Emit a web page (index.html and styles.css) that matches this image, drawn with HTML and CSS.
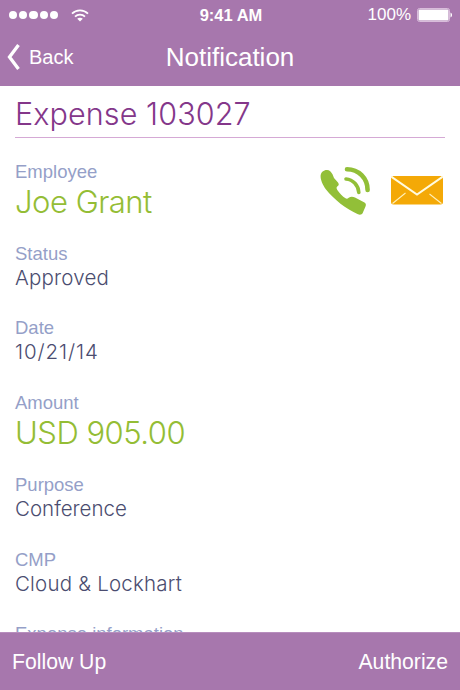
FILE: index.html
```html
<!DOCTYPE html>
<html lang="en">
<head>
  <meta charset="UTF-8">
  <meta name="viewport" content="width=device-width, initial-scale=1.0">
  <title>Notification</title>
  <link rel="stylesheet" href="styles.css">
</head>
<body>
  <div class="screen">
    <header class="header">
      <div class="status-bar">
        <div class="signal">
          <span class="dots"><i></i><i></i><i></i><i></i><i></i></span>
          <svg class="wifi" width="18" height="13" viewBox="0 0 18 13">
            <path d="M1 4.600C5.400.2 12.600.2 17 4.600M4 7.600c2.800-2.700 7.200-2.700 10 0" fill="none" stroke="#fff" stroke-width="1.800"/>
            <path d="M9 12.600 6.200 9.700c1.600-1.400 4-1.400 5.600 0z" fill="#fff"/>
          </svg>
        </div>
        <span class="clock">9:41 AM</span>
        <div class="power">
          <span class="percent">100%</span>
          <svg width="36" height="14" viewBox="0 0 36 14">
            <rect x=".5" y=".5" width="32" height="13" rx="2" fill="none" stroke="#d9bddb"/>
            <rect x="1.500" y="1.500" width="30" height="11" rx="1" fill="#fff"/>
            <path d="M33.500 4.500c2 .8 2 4.200 0 5z" fill="#fff"/>
          </svg>
        </div>
      </div>
      <div class="nav-bar">
        <a class="back">
          <svg width="14" height="28" viewBox="0 0 14 28">
            <path d="M11.500 2 2.500 14l9 12" fill="none" stroke="#fff" stroke-width="3.300"/>
          </svg>
          <span>Back</span>
        </a>
        <h1>Notification</h1>
      </div>
    </header>

    <main class="content">
      <h2>Expense 103027</h2>

      <div class="employee">
        <div class="field large">
          <label>Employee</label>
          <p class="name">Joe Grant</p>
        </div>
        <div class="actions">
          <svg width="52" height="50" viewBox="0 0 52 50">
            <path d="M.6 9.500C1 6 4 3.700 7 3.900c2.500.1 4.300 1.800 5.500 4.400L14 12l4 4.500c1.200 1.600 1 3-.5 3.800-1.200.8-1.200 2.200-.2 3.600 2.500 3.400 5.200 6.200 8.200 8.400 1.200.9 2.200.4 3.200-.6 1.800-1.300 4.200-1.300 6.300-.2l9.500 5c1.300.8 1.800 2.200 1 4l-2.800 6.500c-.7 1.600-2.700 2.200-4.700 1.300C26 43 14 33.500 6 23.500 2.500 18.500.3 13.500.6 9.500z" fill="#92bf38"/>
            <path d="M26 13c7 .5 12.500 6.500 12.800 13.500" fill="none" stroke="#92bf38" stroke-width="3.600" stroke-linecap="round"/>
            <path d="M27 3.200C38.500 3.200 47.600 12 47.600 24" fill="none" stroke="#92bf38" stroke-width="4.600" stroke-linecap="round"/>
          </svg>
          <svg width="52" height="29" viewBox="0 0 52 29">
            <rect width="52" height="28.500" rx="2.500" fill="#f4a907"/>
            <path d="M.5.800 26 18.500 51.500.800" fill="none" stroke="#fffbe0" stroke-width="2"/>
            <path d="M1.500 27.500 14.500 17M50.500 27.500 38.500 18" fill="none" stroke="#fff0b8" stroke-width="1.100"/>
          </svg>
        </div>
      </div>

      <div class="field">
        <label>Status</label>
        <p class="approved">Approved</p>
      </div>
      <div class="field">
        <label>Date</label>
        <p class="date">10/21/14</p>
      </div>
      <div class="field large">
        <label>Amount</label>
        <p class="amount">USD 905.00</p>
      </div>
      <div class="field">
        <label>Purpose</label>
        <p>Conference</p>
      </div>
      <div class="field">
        <label>CMP</label>
        <p class="company">Cloud &amp; Lockhart</p>
      </div>
      <div class="field">
        <label>Expense information</label>
      </div>
    </main>

    <footer class="toolbar">
      <a>Follow Up</a>
      <a>Authorize</a>
    </footer>
  </div>
</body>
</html>
```

FILE: styles.css
```css
* {
  box-sizing: border-box;
}

body {
  margin: 0;
  font-family: "Liberation Sans", Arial, sans-serif;
  background: #fff;
}

h1, h2, p {
  margin: 0;
  font-weight: normal;
}

.screen {
  width: 460px;
  height: 690px;
  display: flex;
  flex-direction: column;
  overflow: hidden;
}

/* Header */
.header {
  flex: none;
  height: 86px;
  background: #a777ad;
  color: #fff;
}

.status-bar {
  height: 30px;
  padding: 0 7px 0 9px;
  display: grid;
  grid-template-columns: 1fr auto 1fr;
  align-items: center;
}

.signal, .dots, .power {
  display: flex;
  align-items: center;
}

.signal {
  gap: 13px;
}

.dots {
  gap: 2px;
}

.dots i {
  width: 8.2px;
  height: 8.2px;
  border-radius: 50%;
  background: #fff;
}

.clock {
  font-size: 16.5px;
  font-weight: bold;
}

.power {
  justify-content: flex-end;
  gap: 6px;
}

.percent {
  font-size: 17px;
}

.nav-bar {
  height: 54px;
  padding: 0 7px;
  display: grid;
  grid-template-columns: 1fr auto 1fr;
  align-items: center;
}

.back {
  display: flex;
  align-items: center;
  gap: 8px;
  font-size: 20px;
}

h1 {
  font-size: 26px;
  line-height: 54px;
}

/* Content */
.content {
  flex: 1;
  min-height: 0;
  overflow: hidden;
  padding: 0 15px;
}

h2 {
  height: 52px;
  margin-bottom: 22.5px;
  padding-top: 8px;
  border-bottom: 1px solid #d5a9d5;
  font-family: Inter, sans-serif;
  font-weight: 300;
  font-size: 30.5px;
  line-height: 40px;
  letter-spacing: 0.1px;
  color: #84378a;
}

.employee {
  display: flex;
  justify-content: space-between;
}

.actions {
  display: flex;
  align-items: center;
  gap: 19px;
  height: 50px;
  margin-top: 5px;
  margin-right: 2px;
}

.field {
  height: 74.7px;
}

.field.large {
  height: 82px;
}

label {
  display: block;
  font-size: 18.5px;
  line-height: 22px;
  color: #959fc8;
}

.field p {
  font-family: Inter, sans-serif;
  font-weight: 300;
  font-size: 20.5px;
  line-height: 26px;
  color: #4b4d70;
}

.field.large p {
  font-size: 31px;
  line-height: 37px;
  color: #94bd35;
}

.name, .amount {
  letter-spacing: -0.5px;
}

.approved, .company {
  letter-spacing: 0.2px;
}

.date {
  letter-spacing: 0.9px;
}

/* Bottom toolbar */
.toolbar {
  flex: none;
  height: 58px;
  padding: 0 12px;
  display: flex;
  justify-content: space-between;
  align-items: center;
  background: #a777ad;
  border-top: 1px solid #b78dbd;
  color: #fff;
  font-size: 21.2px;
}
```
